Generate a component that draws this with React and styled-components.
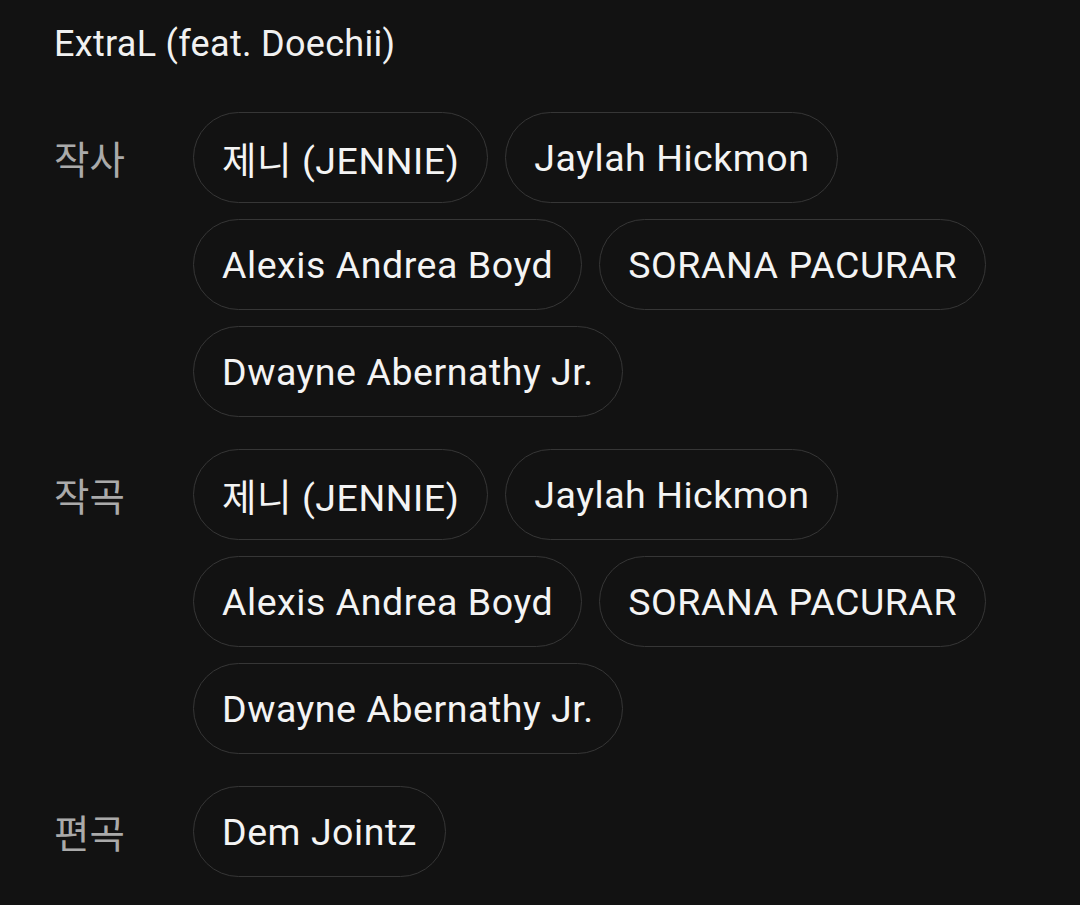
import React from 'react'
import styled, { createGlobalStyle } from 'styled-components'

const GlobalStyle = createGlobalStyle`
  html, body {
    margin: 0;
    padding: 0;
    background: #121212;
  }
  body {
    font-family: Roboto, "Noto Sans CJK KR", sans-serif;
    color: #fff;
  }
`

const Page = styled.div`
  padding: 0 54px;
  min-height: 905px;
  box-sizing: border-box;
`

const Title = styled.h1`
  margin: 0;
  font-size: 36px;
  font-weight: 400;
  letter-spacing: 0.3px;
  line-height: 88px;
  color: #f1f1f1;
`

const Sections = styled.div`
  display: flex;
  flex-direction: column;
  gap: 32px;
  margin-top: 24px;
`

const Section = styled.div`
  display: flex;
  align-items: flex-start;
`

const Label = styled.div`
  flex: 0 0 139px;
  font-family: "Noto Sans CJK KR", Roboto, sans-serif;
  font-size: 38.5px;
  line-height: 91px;
  color: #aaaaaa;
`

const Chips = styled.div`
  display: flex;
  flex-wrap: wrap;
  gap: 16px 17px;
  max-width: 820px;
`

const Chip = styled.div`
  height: 91px;
  box-sizing: border-box;
  display: inline-flex;
  align-items: center;
  padding: 0 28px;
  border: 1px solid #363636;
  border-radius: 46px;
  font-family: Roboto, "Noto Sans CJK KR", sans-serif;
  font-size: 37.5px;
  letter-spacing: 0.55px;
  color: #f4f4f4;
  white-space: nowrap;
`

const people = ['제니 (JENNIE)', 'Jaylah Hickmon', 'Alexis Andrea Boyd', 'SORANA PACURAR', 'Dwayne Abernathy Jr.']

const credits = [
  { label: '작사', names: people },
  { label: '작곡', names: people },
  { label: '편곡', names: ['Dem Jointz'] },
]

export default function App() {
  return (
    <Page>
      <GlobalStyle />
      <Title>ExtraL (feat. Doechii)</Title>
      <Sections>
        {credits.map((c) => (
          <Section key={c.label}>
            <Label>{c.label}</Label>
            <Chips>
              {c.names.map((n) => (
                <Chip key={n}>{n}</Chip>
              ))}
            </Chips>
          </Section>
        ))}
      </Sections>
    </Page>
  )
}
